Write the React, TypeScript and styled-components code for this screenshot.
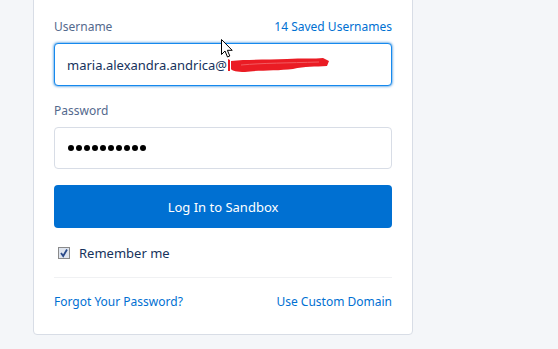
import React from "react";
import styled, { createGlobalStyle } from "styled-components";

const GlobalStyle = createGlobalStyle`
  html, body {
    margin: 0;
    padding: 0;
    background: #f4f6f9;
    font-family: "Noto Sans", "Open Sans", sans-serif;
    overflow: hidden;
  }
`;

export default function App() {
  return (
    <Page>
      <GlobalStyle />
      <Card>
        <LabelRow>
          <Label>Username</Label>
          <Link href="#">14 Saved Usernames</Link>
        </LabelRow>
        <Field focused>
          <FieldText>maria.alexandra.andrica@</FieldText>
          <Scribble viewBox="0 0 104 16" width="104" height="16">
            <path
              d="M1 2 L1 14 L3 14 L3 3 Z M4 4 C20 2 40 3 60 2 C75 1 88 2 96 1 L102 4 L100 9 C88 10 78 9 66 12 C50 14 30 13 18 15 C10 15 5 14 4 12 Z"
              fill="#ea1c24"
            />
            <path d="M14 8 C36 6 60 6 92 5" stroke="#f25a60" strokeWidth="1" fill="none" />
          </Scribble>
        </Field>
        <LabelRow gap={16}>
          <Label>Password</Label>
        </LabelRow>
        <Field>
          <Dots>
            {Array.from({ length: 10 }).map((_, i) => (
              <Dot key={i} />
            ))}
          </Dots>
        </Field>
        <Button>Log In to Sandbox</Button>
        <Remember>
          <Check>
            <svg viewBox="0 0 10 10" width="10" height="10">
              <path d="M2 5 L4.2 8 L8 1.5" stroke="#2a4a8a" strokeWidth="1.8" fill="none" />
            </svg>
          </Check>
          <RememberText>Remember me</RememberText>
        </Remember>
        <Divider />
        <Footer>
          <Link href="#">Forgot Your Password?</Link>
          <Link href="#">Use Custom Domain</Link>
        </Footer>
      </Card>
      <Cursor viewBox="0 0 12 19" width="12" height="19">
        <path
          d="M0.5 0.5 L0.5 15.5 L4 12 L6.5 18 L8.8 17 L6.4 11.3 L11.2 11.3 Z"
          fill="#fff"
          stroke="#000"
          strokeWidth="1"
          strokeLinejoin="round"
        />
      </Cursor>
    </Page>
  );
}

const Page = styled.div`
  position: relative;
  width: 558px;
  height: 349px;
  overflow: hidden;
`;

const Card = styled.div`
  width: 338px;
  margin: -10px 0 0 33px;
  padding: 27px 20px 25px;
  background: #fff;
  border: 1px solid #d8dde6;
  border-radius: 4px;
  display: flex;
  flex-direction: column;
`;

const LabelRow = styled.div<{ gap?: number }>`
  display: flex;
  justify-content: space-between;
  align-items: center;
  height: 16px;
  margin-top: ${(p) => p.gap ?? 0}px;
  margin-bottom: 9px;
`;

const Label = styled.span`
  font-size: 12px;
  color: #54698d;
`;

const Link = styled.a`
  font-size: 12px;
  color: #0070d2;
  text-decoration: none;
`;

const Field = styled.div<{ focused?: boolean }>`
  position: relative;
  height: ${(p) => (p.focused ? 41 : 40)}px;
  display: flex;
  align-items: center;
  padding: 0 12px;
  border: 1px solid ${(p) => (p.focused ? "#1589ee" : "#d8dde6")};
  border-radius: 4px;
  box-shadow: ${(p) => (p.focused ? "0 0 3px #0070d2" : "none")};
  background: #fff;
`;

const FieldText = styled.span`
  font-size: 13px;
  color: #16325c;
`;

const Scribble = styled.svg`
  position: absolute;
  left: 172px;
  top: 13px;
`;

const Dots = styled.div`
  display: flex;
  gap: 2px;
  padding-left: 1px;
`;

const Dot = styled.span`
  width: 6px;
  height: 6px;
  border-radius: 50%;
  background: #000;
`;

const Button = styled.button`
  margin-top: 16px;
  height: 43px;
  border: none;
  border-radius: 4px;
  background: #0070d2;
  color: #fff;
  font-family: inherit;
  font-size: 13px;
`;

const Remember = styled.label`
  display: flex;
  align-items: center;
  gap: 9px;
  height: 16px;
  margin-top: 17px;
  padding-left: 4px;
`;

const Check = styled.span`
  width: 10px;
  height: 10px;
  border: 1px solid #8a8a8a;
  background: #dfe5ef;
  display: flex;
  align-items: center;
  justify-content: center;
`;

const RememberText = styled.span`
  font-size: 13px;
  color: #16325c;
`;

const Divider = styled.div`
  height: 1px;
  background: #f0f1f3;
  margin-top: 16px;
`;

const Footer = styled.div`
  display: flex;
  justify-content: space-between;
  align-items: center;
  height: 16px;
  margin-top: 15px;
`;

const Cursor = styled.svg`
  position: absolute;
  left: 221px;
  top: 39px;
`;
